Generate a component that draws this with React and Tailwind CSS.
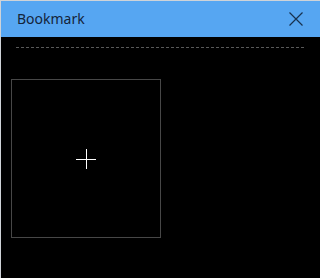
export default function App() {
  return (
    <div className="w-[320px] h-[278px] bg-black border-l border-t border-[#cfd3d8] flex flex-col overflow-hidden font-['Noto_Sans',sans-serif]">
      <div className="h-[36px] bg-[#56a6f2] flex items-center justify-between pl-[16px] pr-[16px] shrink-0">
        <span className="text-[14px] text-[#14243a] leading-none">Bookmark</span>
        <svg width="16" height="16" viewBox="0 0 16 16" className="text-[#17324f]">
          <path d="M1.5 1.5 L14.5 14.5 M14.5 1.5 L1.5 14.5" stroke="currentColor" strokeWidth="1.2" fill="none" />
        </svg>
      </div>
      <div className="mt-[10px] ml-[15px] mr-[15px] h-px bg-[repeating-linear-gradient(90deg,#5a5a5a_0_3px,transparent_3px_5px)]" />
      <div className="mt-[31px] ml-[10px] w-[150px] h-[159px] border border-[#474747] flex items-center justify-center">
        <svg width="20" height="20" viewBox="0 0 20 20" shapeRendering="crispEdges">
          <path d="M10.5 0 V20 M0 10.5 H20" stroke="#fff" strokeWidth="1.5" fill="none" />
        </svg>
      </div>
    </div>
  );
}
